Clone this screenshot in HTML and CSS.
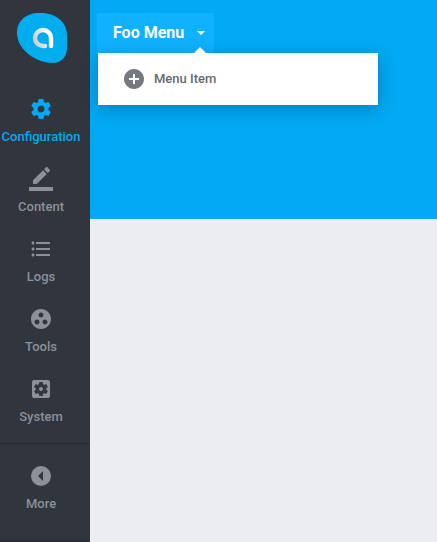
FILE: index.html
```
<!DOCTYPE html>
<html lang="en">
<head>
<meta charset="utf-8">
<title>Foo Menu</title>
<link rel="stylesheet" href="styles.css">
</head>
<body>
<nav class="sidebar">
  <a class="logo">
    <svg width="52" height="52" viewBox="0 0 52 52">
      <defs><linearGradient id="silver" x1="0" y1="0.7" x2="1" y2="0.3"><stop offset="0" stop-color="#cfd2d4"/><stop offset=".45" stop-color="#e2e2e2"/><stop offset=".75" stop-color="#fff"/></linearGradient></defs>
      <path fill="#00adee" d="M23 1C38 0 51 9 51 23V36C51 45 45 51 36 51C17 50 1 36 1 21C1 9 10 1 23 1Z"/>
      <path fill="none" stroke="url(#silver)" stroke-width="4.400" stroke-linecap="round" d="M29 34H27A8 8 0 1 1 35 26V34"/>
    </svg>
  </a>
  <a class="item active">
    <svg class="icon" viewBox="0 0 24 24"><path d="M19.43 12.98c.04-.32.07-.64.07-.98s-.03-.66-.07-.98l2.11-1.65c.19-.15.24-.42.12-.64l-2-3.46c-.12-.22-.39-.3-.61-.22l-2.49 1c-.52-.4-1.08-.73-1.69-.98l-.38-2.65C14.46 2.18 14.25 2 14 2h-4c-.25 0-.46.18-.49.42l-.38 2.65c-.61.25-1.17.59-1.69.98l-2.49-1c-.23-.09-.49 0-.61.22l-2 3.46c-.13.22-.07.49.12.64l2.11 1.65c-.04.32-.07.65-.07.98s.03.66.07.98l-2.11 1.65c-.19.15-.24.42-.12.64l2 3.46c.12.22.39.3.61.22l2.49-1c.52.4 1.08.73 1.69.98l.38 2.65c.03.24.24.42.49.42h4c.25 0 .46-.18.49-.42l.38-2.65c.61-.25 1.17-.59 1.69-.98l2.49 1c.23.09.49 0 .61-.22l2-3.46c.12-.22.07-.49-.12-.64l-2.11-1.65zM12 15.5c-1.93 0-3.5-1.57-3.5-3.5s1.57-3.5 3.5-3.5 3.5 1.57 3.5 3.5-1.57 3.5-3.5 3.5z"/></svg>
    <span>Configuration</span>
  </a>
  <a class="item">
    <svg class="icon" viewBox="0 0 24 24"><path d="M17.75 7L14 3.25l-10 10V17h3.75l10-10zm2.96-2.96c.39-.39.39-1.02 0-1.41L18.37.29c-.39-.39-1.02-.39-1.41 0L15 2.25 18.75 6l1.96-1.96zM0 20h24v4H0z"/></svg>
    <span>Content</span>
  </a>
  <a class="item">
    <svg class="icon" viewBox="0 0 24 24"><path d="M4 10.5c-.83 0-1.5.67-1.5 1.5s.67 1.5 1.5 1.5 1.5-.67 1.5-1.5-.67-1.5-1.5-1.5zm0-6c-.83 0-1.5.67-1.5 1.5S3.17 7.5 4 7.5 5.5 6.83 5.5 6 4.83 4.5 4 4.5zm0 12c-.83 0-1.5.68-1.5 1.5s.68 1.5 1.5 1.5 1.5-.68 1.5-1.5-.67-1.5-1.5-1.5zM7 19h14v-2H7v2zm0-6h14v-2H7v2zm0-8v2h14V5H7z"/></svg>
    <span>Logs</span>
  </a>
  <a class="item">
    <svg class="icon" viewBox="0 0 24 24"><path d="M12 2C6.480 2 2 6.480 2 12s4.480 10 10 10 10-4.480 10-10S17.520 2 12 2zM8 17.500c-1.380 0-2.500-1.120-2.500-2.500s1.120-2.500 2.500-2.500 2.500 1.120 2.500 2.500-1.120 2.500-2.500 2.500zM9.500 8c0-1.380 1.120-2.500 2.500-2.500s2.500 1.120 2.500 2.500-1.120 2.500-2.500 2.500S9.500 9.380 9.500 8zm6.500 9.500c-1.380 0-2.500-1.120-2.500-2.500s1.120-2.500 2.500-2.500 2.500 1.120 2.500 2.500-1.120 2.500-2.500 2.500z"/></svg>
    <span>Tools</span>
  </a>
  <a class="item">
    <svg class="icon" viewBox="0 0 24 24"><path d="M12 10c-1.100 0-2 .9-2 2s.9 2 2 2 2-.9 2-2-.9-2-2-2zm7-7H5c-1.110 0-2 .9-2 2v14c0 1.100.89 2 2 2h14c1.110 0 2-.9 2-2V5c0-1.100-.89-2-2-2zm-1.750 9c0 .23-.02.46-.05.68l1.480 1.160c.13.11.17.3.08.45l-1.400 2.420c-.09.15-.27.21-.43.15l-1.740-.7c-.36.28-.76.51-1.180.69l-.26 1.850c-.03.17-.18.3-.35.3h-2.800c-.17 0-.32-.13-.35-.29l-.26-1.850c-.43-.18-.82-.41-1.180-.69l-1.740.7c-.16.06-.34 0-.43-.15l-1.400-2.420c-.09-.15-.05-.34.08-.45l1.480-1.160c-.03-.23-.05-.46-.05-.69 0-.23.02-.46.05-.68l-1.480-1.160c-.13-.11-.17-.3-.08-.45l1.400-2.420c.09-.15.27-.21.43-.15l1.740.7c.36-.28.76-.51 1.180-.69l.26-1.850c.03-.17.18-.3.35-.3h2.800c.17 0 .32.13.35.29l.26 1.850c.43.18.82.41 1.180.69l1.740-.7c.16-.06.34 0 .43.15l1.400 2.420c.09.15.05.34-.08.45l-1.480 1.160c.03.23.05.46.05.69z"/></svg>
    <span>System</span>
  </a>
  <a class="item more">
    <svg class="icon" viewBox="0 0 24 24"><path fill-rule="evenodd" d="M12 2a10 10 0 1 0 0 20 10 10 0 0 0 0-20zM14 7v10l-5-5z"/></svg>
    <span>More</span>
  </a>
</nav>
<main class="content">
  <header class="hero">
    <div class="menu">
      <button class="menu-button">Foo Menu<i class="caret"></i></button>
      <div class="dropdown">
        <svg class="icon" viewBox="0 0 24 24"><path d="M12 2C6.480 2 2 6.480 2 12s4.480 10 10 10 10-4.480 10-10S17.520 2 12 2zm5 11h-4v4h-2v-4H7v-2h4V7h2v4h4v2z"/></svg>
        <span>Menu Item</span>
      </div>
    </div>
  </header>
</main>
</body>
</html>
```
FILE: styles.css
```
* { box-sizing: border-box; }
body {
  margin: 0;
  height: 542px;
  display: flex;
  overflow: hidden;
  background: #ebedf1;
  font: 500 13px/20px Roboto, sans-serif;
}
.icon { display: block; width: 24px; height: 24px; fill: currentColor; }
.sidebar {
  width: 90px;
  height: 542px;
  flex: none;
  background: #31353e;
  color: #8b909a;
}
.logo { display: block; height: 85px; padding: 12px 0 0 16px; }
.item {
  display: flex;
  flex-direction: column;
  align-items: center;
  gap: 6px;
  width: 82px;
  height: 70px;
  padding-top: 12px;
}
.active { color: #03a9f4; }
.item.more {
  width: 90px;
  height: 98px;
  margin-top: 8px;
  padding: 20px 8px 0 0;
  border-top: 1px solid #272a32;
  border-bottom: 1px solid #292b33;
}
.content { flex: 1; }
.hero { height: 219px; padding: 13px 0 0 7px; background: #03a9f4; }
.menu { position: relative; width: 117px; }
.menu-button {
  display: flex;
  align-items: center;
  width: 117px;
  height: 40px;
  padding: 0 9px 0 16px;
  border: 0;
  border-radius: 3px;
  background: #10b1ff;
  color: #fff;
  font: 700 16px/20px Roboto, sans-serif;
}
.caret {
  margin-left: auto;
  border: 4px solid transparent;
  border-top-color: #fff;
  border-bottom: 0;
}
.dropdown {
  position: absolute;
  top: 40px;
  left: 1px;
  display: flex;
  align-items: center;
  gap: 8px;
  width: 280px;
  height: 52px;
  padding-left: 24px;
  background: #fff;
  color: #66696d;
  box-shadow: 0 4px 16px rgba(0, 0, 0, .25);
}
.dropdown .icon { color: #757982; }
.dropdown::before {
  content: "";
  position: absolute;
  top: -6px;
  left: 96px;
  border: 6px solid transparent;
  border-top: 0;
  border-bottom-color: #fff;
}
```
